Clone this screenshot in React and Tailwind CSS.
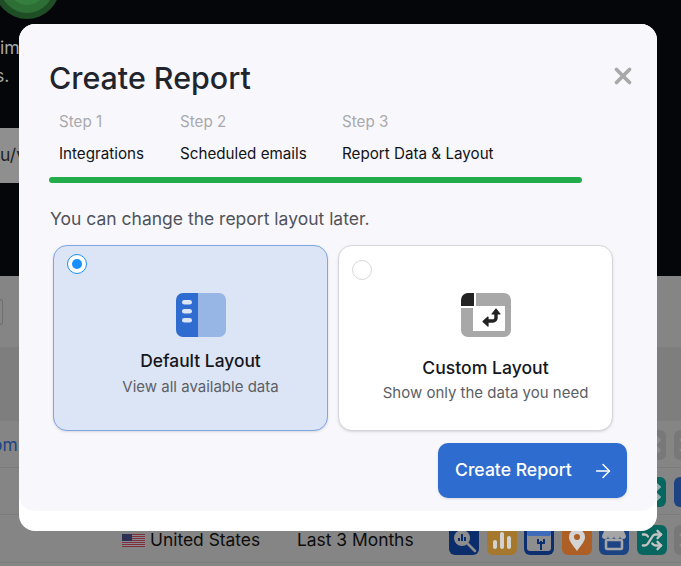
import { ArrowRight, X, Shuffle } from "lucide-react";

const FONT = "font-['Inter','Liberation_Sans',sans-serif]";

function Tile({ className, children }) {
  return (
    <div className={`w-[30px] h-[30px] shrink-0 rounded-[6px] flex items-center justify-center ${className}`}>
      {children}
    </div>
  );
}

function GrayShuffleTile() {
  return <Tile className="bg-[#787878]"><Shuffle size={20} strokeWidth={3} color="#8a8a8a" /></Tile>;
}

function Flag() {
  return (
    <svg width="23" height="13" viewBox="0 0 23 13" className="shrink-0">
      <rect width="23" height="13" fill="#8b8b95" />
      {[0, 2, 4, 6, 8, 10, 12].map((y) => (
        <rect key={y} y={y} width="23" height="1" fill="#7e2f38" />
      ))}
      <rect width="10" height="7" fill="#2e2f55" />
    </svg>
  );
}

function ReportTiles() {
  return (
    <div className="flex gap-[7.5px] ml-[449px] w-[300px]">
      <Tile className="bg-[#0b2d6c]">
        <svg width="26" height="26" viewBox="0 0 26 26">
          <circle cx="11" cy="11" r="8" fill="#8d8d8d" />
          <path d="M17 17l7 7" stroke="#8d8d8d" strokeWidth="2.5" strokeLinecap="round" />
          <path d="M8 14v-3M11 14V7M14 14v-4" stroke="#0b2d6c" strokeWidth="2" />
        </svg>
      </Tile>
      <Tile className="bg-[#a5782e]">
        <svg width="22" height="22" viewBox="0 0 22 22">
          <rect x="2" y="11" width="4" height="9" rx="2" fill="#d2d2d2" />
          <rect x="9" y="3" width="4" height="17" rx="2" fill="#d2d2d2" />
          <rect x="16" y="7" width="4" height="13" rx="2" fill="#d2d2d2" />
        </svg>
      </Tile>
      <Tile className="bg-[#0e2f6f]">
        <svg width="26" height="26" viewBox="0 0 26 26">
          <rect x="1" y="3" width="24" height="21" rx="3" fill="#8e8e8e" />
          <rect x="1" y="3" width="24" height="6" rx="2" fill="#3f6cb8" />
          <path d="M15 14v9M12 12v4h6v-4" stroke="#0e2f6f" strokeWidth="2" fill="none" />
        </svg>
      </Tile>
      <Tile className="bg-[#ad5f26]">
        <svg width="20" height="24" viewBox="0 0 20 24">
          <path d="M10 23C5 16 2 13 2 9a8 8 0 0 1 16 0c0 4-3 7-8 14z" fill="#d4d4d4" />
          <circle cx="10" cy="9" r="3" fill="#ad5f26" />
        </svg>
      </Tile>
      <Tile className="bg-[#1c4485]">
        <svg width="26" height="26" viewBox="0 0 26 26">
          <path d="M4 2h18l3 7a3 3 0 0 1-6 0 3 3 0 0 1-6 0 3 3 0 0 1-6 0 3 3 0 0 1-6 0z" fill="#a6a6a6" />
          <rect x="5" y="13" width="16" height="9" rx="1" fill="none" stroke="#a6a6a6" strokeWidth="2.5" />
        </svg>
      </Tile>
      <Tile className="bg-[#07665f]"><Shuffle size={22} strokeWidth={2.5} color="#c4c4c4" /></Tile>
      <GrayShuffleTile />
    </div>
  );
}

function DefaultIcon() {
  return (
    <svg width="50" height="44" viewBox="0 0 50 44">
      <path d="M22 0h21a7 7 0 0 1 7 7v30a7 7 0 0 1-7 7H22z" fill="#97b5e5" />
      <path d="M7 0h15v44H7a7 7 0 0 1-7-7V7a7 7 0 0 1 7-7z" fill="#2f6ccf" />
      <rect x="6" y="7" width="10" height="4.6" rx="2.3" fill="#dce5f5" />
      <rect x="6" y="16" width="10" height="4.6" rx="2.3" fill="#dce5f5" />
      <rect x="6" y="25" width="10" height="4.6" rx="2.3" fill="#dce5f5" />
    </svg>
  );
}

function CustomIcon() {
  return (
    <svg width="50" height="44" viewBox="0 0 50 44">
      <path d="M15 0h28a7 7 0 0 1 7 7v30a7 7 0 0 1-7 7H7a7 7 0 0 1-7-7V15h12v23h32V13H15z" fill="#a8a8a8" />
      <path d="M7 0h6v13H0V7a7 7 0 0 1 7-7z" fill="#222222" />
      <path d="M35 20v5a3 3 0 0 1-3 3h-6" fill="none" stroke="#222222" strokeWidth="3.4" />
      <path d="M31 21l4-5 4 5z" fill="#222222" stroke="#222222" strokeWidth="1.2" strokeLinejoin="round" />
      <path d="M27 24l-5 4.500 5 4.500z" fill="#222222" stroke="#222222" strokeWidth="1.2" strokeLinejoin="round" />
    </svg>
  );
}

function Step({ n, label, className }) {
  return (
    <div className={className}>
      <div className="text-[15.2px] leading-[20px] text-[#a9a9ad]">Step {n}</div>
      <div className="mt-[12px] text-[15.2px] leading-[20px] text-[#111318]">{label}</div>
    </div>
  );
}

export default function App() {
  return (
    <div className={`relative w-[681px] h-[566px] overflow-hidden bg-[#858585] ${FONT}`}>
      {/* page behind the dialog */}
      <div className="h-[276px] bg-[#05060a] overflow-hidden text-[17.6px] text-[#a9a9a9]">
        <div className="w-[66px] h-[66px] -mt-[47px] -ml-[6px] rounded-full bg-[#1f4d25] p-[6px]">
          <div className="w-full h-full rounded-full bg-[#2e6f36] p-[8px]">
            <div className="w-full h-full rounded-full bg-[#357f3e]" />
          </div>
        </div>
        <div className="mt-[15px] leading-[28px]">
          <div>im</div>
          <div className="-ml-[5px]">s.</div>
        </div>
        <div className="mt-[38px] h-[55px] w-[100px] bg-[#8f8f8f] flex items-center text-[#222222]">
          <span>u/v</span>
        </div>
      </div>
      <div className="h-[71px] flex items-center">
        <div className="w-[3px] h-[26px] rounded-r-[4px] border border-l-0 border-[#6f6f6f]" />
      </div>
      <div className="h-[74px] bg-[#7e7e7e]" />
      <div className="h-[47px] border-b border-[#7b7b7b] flex items-center pt-[1px]">
        <span className="text-[17.4px] leading-[24px] text-[#1c4485] w-[644px] -ml-[8px] shrink-0">om</span>
        <div className="flex gap-[7.5px] w-[80px] shrink-0">
          <GrayShuffleTile />
          <GrayShuffleTile />
        </div>
      </div>
      <div className="h-[47px] border-b border-[#7b7b7b] pt-[9px]">
        <div className="flex gap-[7.5px] ml-[636px] w-[80px]">
          <Tile className="bg-[#07665f]"><Shuffle size={20} strokeWidth={3} color="#8fb0ad" /></Tile>
          <Tile className="bg-[#1c4485]" />
        </div>
      </div>
      <div className="h-[48px] border-b border-[#7b7b7b] relative pt-[10px]">
        <ReportTiles />
        <div className="absolute left-[122px] top-[12px] flex items-center text-[17.4px] leading-[26px] text-[#0d0d0d]">
          <Flag />
          <span className="ml-[5px] w-[147px]">United States</span>
          <span>Last 3 Months</span>
        </div>
      </div>

      {/* dialog */}
      <div className="absolute left-[19px] top-[24px] w-[638px] h-[507px] rounded-[16px] bg-white">
        <div className="relative h-[487px] rounded-[16px] bg-[#f8f8fc] pt-[34px] pl-[30px]">
          <h2 className="text-[30.4px] leading-[40px] font-medium text-[#21242c]">Create Report</h2>
          <button className="absolute right-[21px] top-[39px] text-[#a8a8a8]">
            <X size={26} strokeWidth={3.4} />
          </button>
          <div className="mt-[14px] flex pl-[10px] h-[64px]">
            <Step n={1} label="Integrations" className="w-[121px]" />
            <Step n={2} label="Scheduled emails" className="w-[162px]" />
            <Step n={3} label="Report Data & Layout" />
          </div>
          <div className="mt-[1px] w-[533px] h-[6px] rounded-full bg-[#22ac4c]" />
          <p className="mt-[24px] ml-[1px] text-[17.5px] leading-[24px] text-[#50535a]">You can change the report layout later.</p>
          <div className="mt-[14px] ml-[4px] flex gap-[10px]">
            <div className="relative w-[275px] h-[186px] rounded-[14px] border border-[#7fa5e3] bg-[#dce5f5] flex flex-col items-center pt-[47px] pl-[20px] shadow-sm">
              <span className="absolute left-[13px] top-[8px] w-[20px] h-[20px] rounded-full border border-[#1890ff] bg-white flex items-center justify-center">
                <span className="w-[10px] h-[10px] rounded-full bg-[#1890ff]" />
              </span>
              <DefaultIcon />
              <div className="mt-[12px] text-[17.4px] leading-[24px] font-medium text-[#14161b]">Default Layout</div>
              <div className="mt-[2px] text-[15px] leading-[24px] text-[#5c5f66]">View all available data</div>
            </div>
            <div className="relative w-[275px] h-[186px] rounded-[14px] border border-[#d6d6da] bg-white flex flex-col items-center pt-[47px] pl-[20px] shadow-sm">
              <span className="absolute left-[13px] top-[14px] w-[20px] h-[20px] rounded-full border border-[#d9d9d9] bg-white" />
              <CustomIcon />
              <div className="mt-[19px] text-[17.6px] leading-[24px] font-medium text-[#14161b]">Custom Layout</div>
              <div className="mt-[1px] text-[15px] leading-[24px] text-[#5c5f66]">Show only the data you need</div>
            </div>
          </div>
          <button className="absolute left-[419px] top-[419px] w-[189px] h-[55px] rounded-[10px] bg-[#2f6ccf] text-white flex items-center pl-[17px] shadow-sm">
            <span className="text-[17.6px] font-medium">Create Report</span>
            <ArrowRight size={22} strokeWidth={1.6} className="ml-[20px]" />
          </button>
        </div>
      </div>
    </div>
  );
}
